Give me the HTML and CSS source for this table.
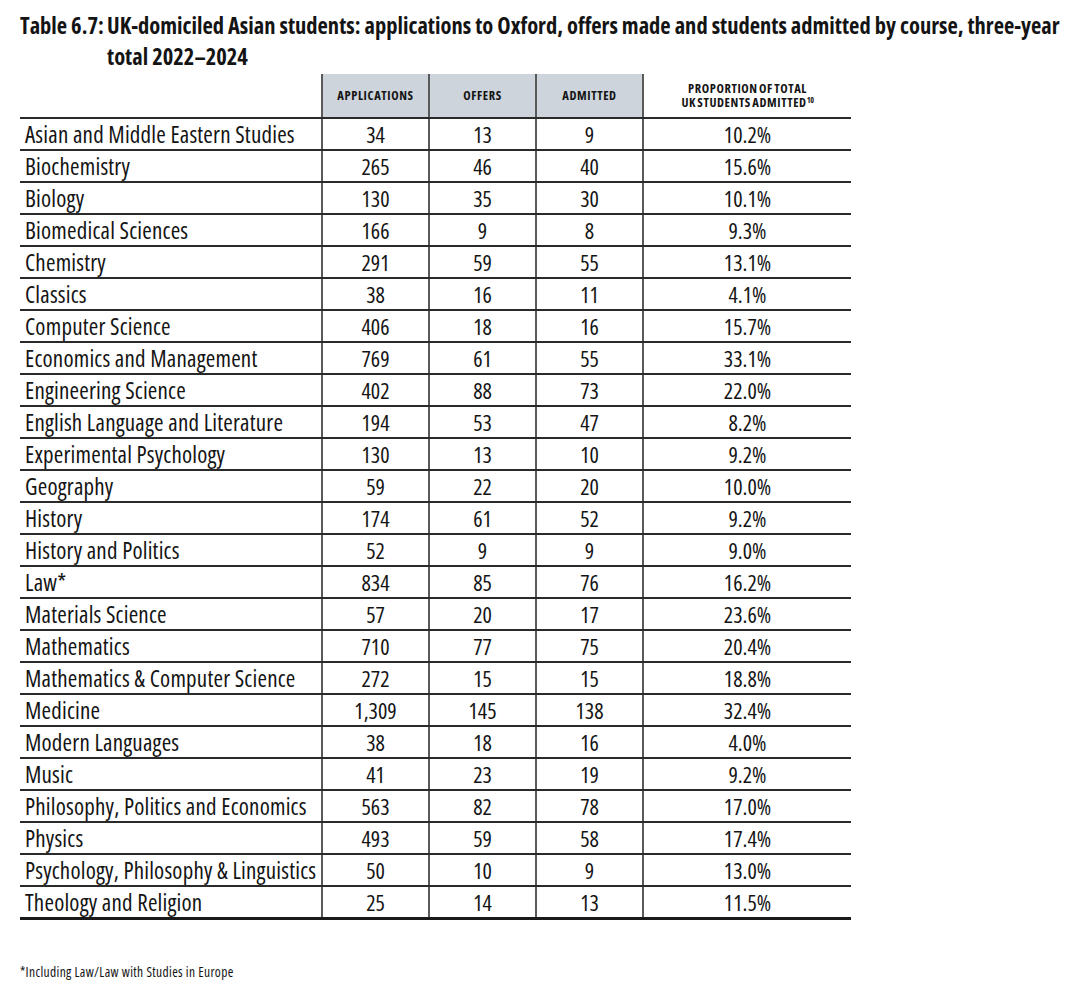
FILE: index.html
```html
<!DOCTYPE html>
<html lang="en">
<head>
<meta charset="utf-8">
<title>Table 6.7</title>
<link rel="stylesheet" href="styles.css">
</head>
<body>
<div class="page">
  <h1 class="title"><span class="num">Table 6.7:</span><span class="text">UK-domiciled Asian students: applications to Oxford, offers made and students admitted by course, three-year total 2022–2024</span></h1>
  <table class="data">
    <colgroup>
      <col class="c-label"><col class="c-num"><col class="c-num"><col class="c-num"><col class="c-prop">
    </colgroup>
    <thead>
      <tr>
        <th class="blank"></th>
        <th>APPLICATIONS</th>
        <th>OFFERS</th>
        <th>ADMITTED</th>
        <th class="prop">PROPORTION OF TOTAL<br>UK STUDENTS ADMITTED<sup>10</sup></th>
      </tr>
    </thead>
    <tbody>
      <tr><td>Asian and Middle Eastern Studies</td><td>34</td><td>13</td><td>9</td><td>10.2%</td></tr>
      <tr><td>Biochemistry</td><td>265</td><td>46</td><td>40</td><td>15.6%</td></tr>
      <tr><td>Biology</td><td>130</td><td>35</td><td>30</td><td>10.1%</td></tr>
      <tr><td>Biomedical Sciences</td><td>166</td><td>9</td><td>8</td><td>9.3%</td></tr>
      <tr><td>Chemistry</td><td>291</td><td>59</td><td>55</td><td>13.1%</td></tr>
      <tr><td>Classics</td><td>38</td><td>16</td><td>11</td><td>4.1%</td></tr>
      <tr><td>Computer Science</td><td>406</td><td>18</td><td>16</td><td>15.7%</td></tr>
      <tr><td>Economics and Management</td><td>769</td><td>61</td><td>55</td><td>33.1%</td></tr>
      <tr><td>Engineering Science</td><td>402</td><td>88</td><td>73</td><td>22.0%</td></tr>
      <tr><td>English Language and Literature</td><td>194</td><td>53</td><td>47</td><td>8.2%</td></tr>
      <tr><td>Experimental Psychology</td><td>130</td><td>13</td><td>10</td><td>9.2%</td></tr>
      <tr><td>Geography</td><td>59</td><td>22</td><td>20</td><td>10.0%</td></tr>
      <tr><td>History</td><td>174</td><td>61</td><td>52</td><td>9.2%</td></tr>
      <tr><td>History and Politics</td><td>52</td><td>9</td><td>9</td><td>9.0%</td></tr>
      <tr><td>Law*</td><td>834</td><td>85</td><td>76</td><td>16.2%</td></tr>
      <tr><td>Materials Science</td><td>57</td><td>20</td><td>17</td><td>23.6%</td></tr>
      <tr><td>Mathematics</td><td>710</td><td>77</td><td>75</td><td>20.4%</td></tr>
      <tr><td>Mathematics &amp; Computer Science</td><td>272</td><td>15</td><td>15</td><td>18.8%</td></tr>
      <tr><td>Medicine</td><td>1,309</td><td>145</td><td>138</td><td>32.4%</td></tr>
      <tr><td>Modern Languages</td><td>38</td><td>18</td><td>16</td><td>4.0%</td></tr>
      <tr><td>Music</td><td>41</td><td>23</td><td>19</td><td>9.2%</td></tr>
      <tr><td>Philosophy, Politics and Economics</td><td>563</td><td>82</td><td>78</td><td>17.0%</td></tr>
      <tr><td>Physics</td><td>493</td><td>59</td><td>58</td><td>17.4%</td></tr>
      <tr><td>Psychology, Philosophy &amp; Linguistics</td><td>50</td><td>10</td><td>9</td><td>13.0%</td></tr>
      <tr class="last"><td>Theology and Religion</td><td>25</td><td>14</td><td>13</td><td>11.5%</td></tr>
    </tbody>
  </table>
  <p class="footnote">*Including Law/Law with Studies in Europe</p>
</div>
</body>
</html>
```

FILE: styles.css
```css
html, body {
  margin: 0;
  padding: 0;
  background: #ffffff;
}

body {
  font-family: "Open Sans", "DejaVu Sans Condensed", sans-serif;
  font-stretch: 75%;
  color: #141414;
}

.page {
  padding: 10px 0 0 20px;
}

.title {
  display: flex;
  margin: 0;
  font-size: 22.5px;
  font-weight: 700;
  line-height: 31px;
  color: #141414;
}

.title .num {
  flex: none;
  width: 87px;
}

.title .text {
  width: 960px;
}

.data {
  margin-top: 2px;
  border-collapse: collapse;
  table-layout: fixed;
  width: 831px;
}

.c-label { width: 302px; }
.c-num { width: 107px; }
.c-prop { width: 208px; }

.data th {
  height: 43px;
  padding: 0;
  background: #cdd4dc;
  font-size: 12.5px;
  font-weight: 700;
  letter-spacing: 0.6px;
  line-height: 12px;
  text-align: center;
  vertical-align: middle;
  border-left: 2px solid #5a5a5a;
  border-bottom: 2px solid #2a2a2a;
}

.data th.blank {
  background: transparent;
  border-left: none;
}

.data th.prop {
  background: transparent;
  line-height: 13.5px;
  word-spacing: -1.5px;
}

.data th sup {
  font-size: 8px;
  line-height: 0;
  vertical-align: 4px;
  letter-spacing: -0.3px;
}

.data td {
  height: 30px;
  padding: 0;
  font-size: 22px;
  line-height: 30px;
  text-align: center;
  border-left: 2px solid #5a5a5a;
  border-bottom: 2px solid #2a2a2a;
  white-space: nowrap;
}

.data td:first-child {
  text-align: left;
  padding-left: 5px;
  border-left: none;
  font-size: 23px;
  letter-spacing: 0.2px;
}

.data tr.last td {
  border-bottom: 3px solid #1a1a1a;
}

.footnote {
  margin: 43px 0 0 0;
  font-size: 13.5px;
  letter-spacing: 0.35px;
  color: #141414;
}
```
